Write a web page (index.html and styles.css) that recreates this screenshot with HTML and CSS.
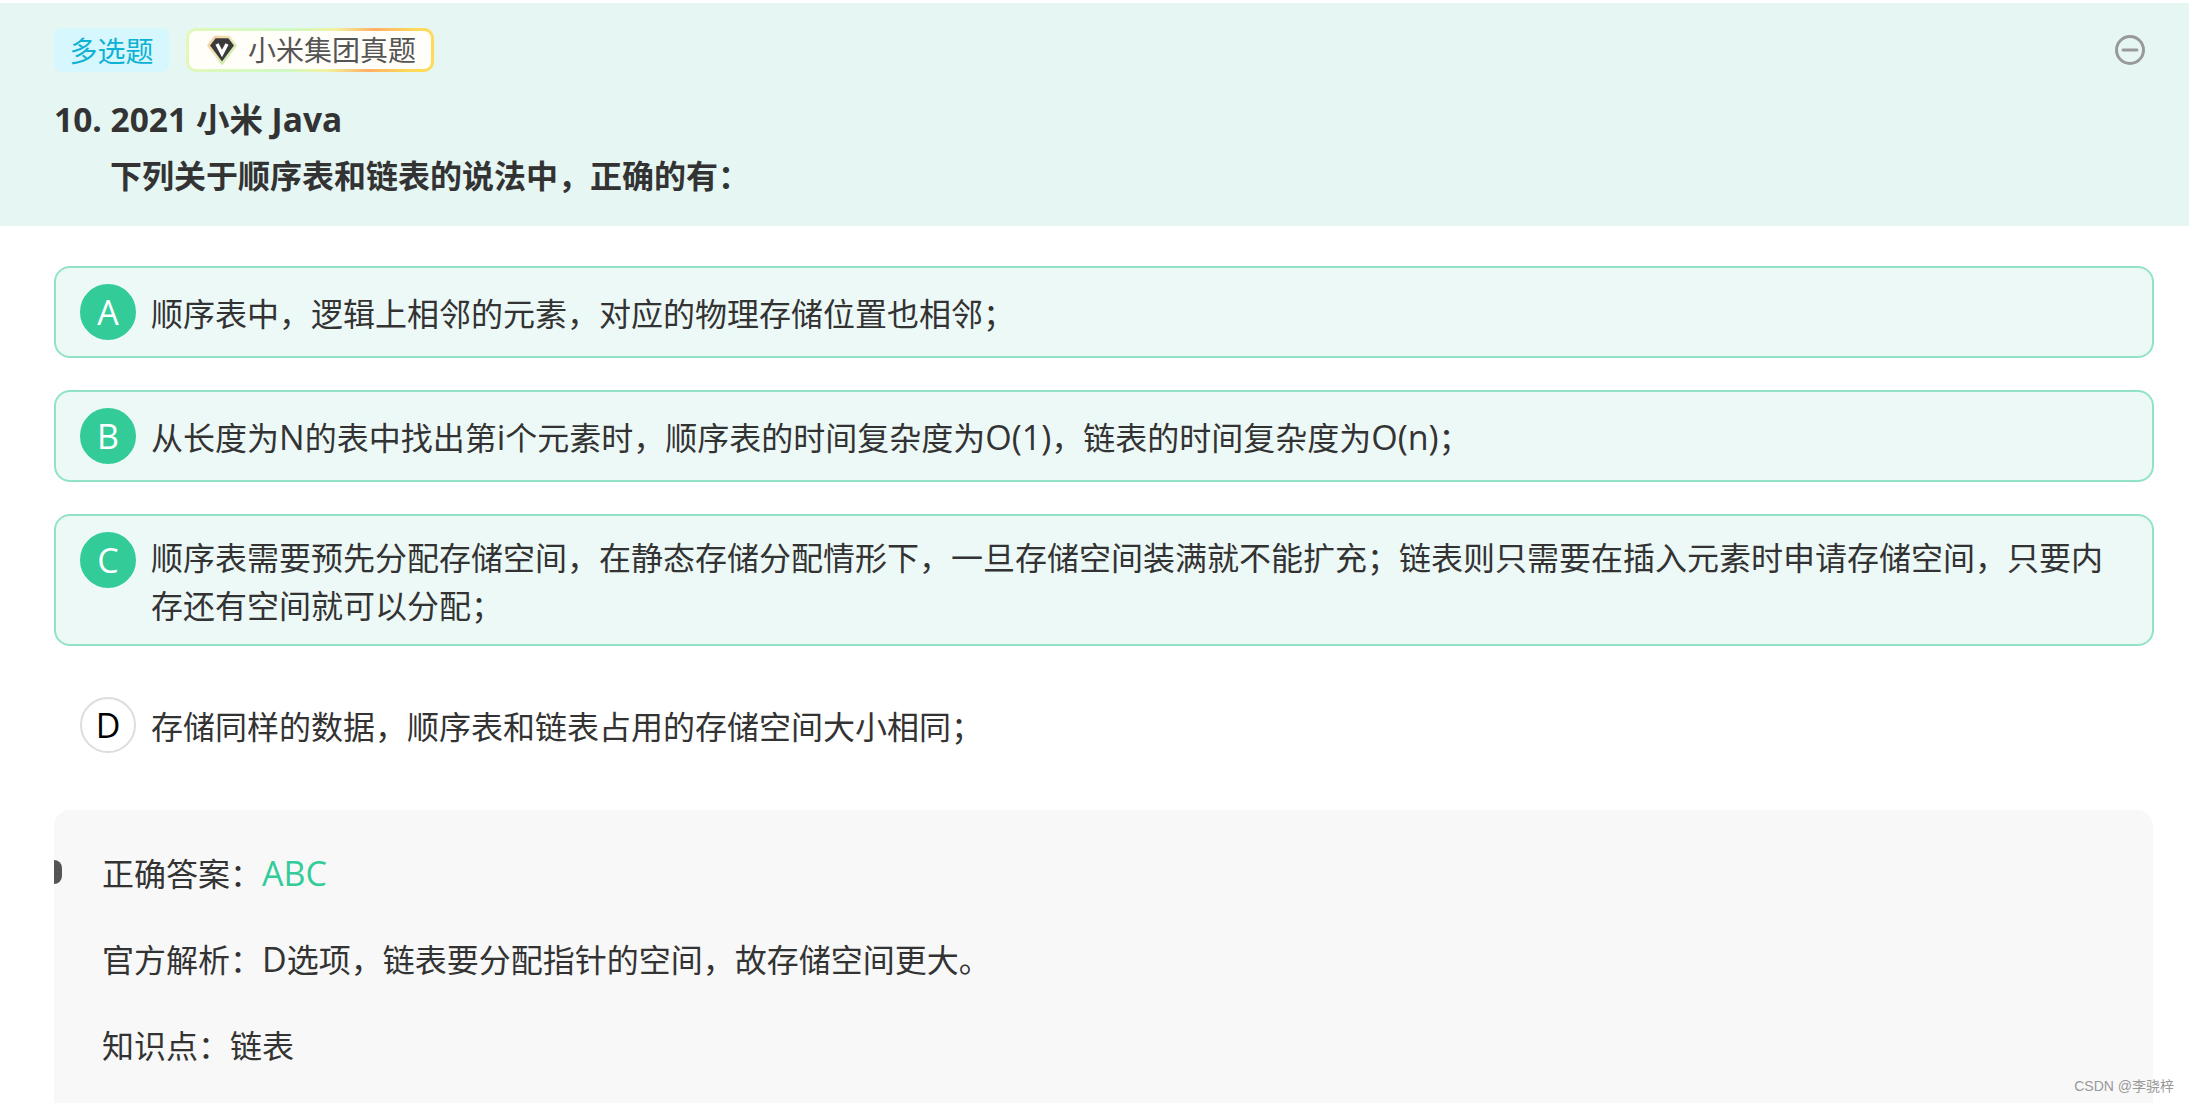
FILE: index.html
```html
<!DOCTYPE html>
<html lang="zh-CN">
<head>
<meta charset="utf-8">
<title>多选题</title>
<link rel="stylesheet" href="styles.css">
</head>
<body>
<header class="head">
  <div class="tags">
    <span class="tag-type">多选题</span>
    <span class="tag-co">
      <svg class="tag-icon" viewBox="0 0 32 32" aria-hidden="true">
        <defs>
          <linearGradient id="glow" x1="0" y1="0" x2="1" y2="1">
            <stop offset="0" stop-color="#f6c9a0"/>
            <stop offset="0.45" stop-color="#eee6b4"/>
            <stop offset="1" stop-color="#b5f0b0"/>
          </linearGradient>
        </defs>
        <path d="M9 3H23L29.500 11.500 16 29.500 2.500 11.500Z" fill="#3a3a3a" stroke="url(#glow)" stroke-width="2.500" stroke-linejoin="round"/>
        <path d="M11 10L16 19.500 21 10" fill="none" stroke="#fff" stroke-width="3.500"/>
      </svg>
      <span>小米集团真题</span>
    </span>
    <svg class="collapse" viewBox="0 0 30 30" aria-hidden="true">
      <circle cx="15" cy="15" r="13.500" fill="none" stroke="#999" stroke-width="3"/>
      <path d="M8 15H22" stroke="#999" stroke-width="3" stroke-linecap="round"/>
    </svg>
  </div>
  <h1 class="title">10. 2021 小米 Java</h1>
  <p class="question">下列关于顺序表和链表的说法中，正确的有：</p>
</header>
<main class="body">
  <div class="option on"><span class="mark">A</span><p class="text">顺序表中，逻辑上相邻的元素，对应的物理存储位置也相邻；</p></div>
  <div class="option on"><span class="mark">B</span><p class="text"><span>从长度为<span class="lat">N</span>的表中找出第<span class="lat">i</span>个元素时，顺序表的时间复杂度为<span class="lat">O(1)</span>，链表的时间复杂度为<span class="lat">O(n)</span>；</span></p></div>
  <div class="option on"><span class="mark">C</span><p class="text">顺序表需要预先分配存储空间，在静态存储分配情形下，一旦存储空间装满就不能扩充；链表则只需要在插入元素时申请存储空间，只要内存还有空间就可以分配；</p></div>
  <div class="option off"><span class="mark">D</span><p class="text">存储同样的数据，顺序表和链表占用的存储空间大小相同；</p></div>
  <section class="answer">
    <span class="handle"></span>
    <p class="line">正确答案：<span class="right lat">ABC</span></p>
    <p class="line">官方解析：<span class="lat">D</span>选项，链表要分配指针的空间，故存储空间更大。</p>
    <p class="line">知识点：链表</p>
  </section>
</main>
<div class="mark-csdn">CSDN @李骁梓</div>
</body>
</html>
```
FILE: styles.css
```css
* { box-sizing: border-box; }
html, body { margin: 0; height: 1103px; overflow: hidden; }
body {
  background: #fff;
  color: #333;
  font-family: "Open Sans", "Noto Sans CJK SC", sans-serif;
  font-size: 32px;
  position: relative;
  padding-top: 3px;
}
p, h1 { margin: 0; }
.head {
  height: 223px;
  background: #e5f6f3;
  padding: 25px 36px 0 54px;
}
.tags { display: flex; align-items: center; height: 44px; }
.tag-type {
  width: 115px; height: 44px;
  display: flex; align-items: center; justify-content: center;
  background: #d6f7fe; color: #0eb2d4;
  border-radius: 8px;
  font-size: 28px;
}
.tag-co {
  margin-left: 17px;
  width: 248px; height: 44px;
  padding-left: 17px;
  display: flex; align-items: center; gap: 10px;
  border: 3px solid transparent;
  border-radius: 10px;
  background:
    linear-gradient(#fffef8, #fffef8) padding-box,
    linear-gradient(100deg, #e2f9b8 0%, #cff9c6 42%, #f0f3a0 58%, #ffb066 74%, #ffd95a 90%, #ffd95a 100%) border-box;
  color: #555;
  font-size: 28px;
  line-height: 1;
}
.tag-icon { width: 32px; height: 32px; flex: none; }
.collapse { width: 30px; height: 30px; margin-left: auto; margin-right: 8px; }
.title {
  margin-top: 22px;
  font-size: 33.500px; font-weight: 700;
  line-height: 50px;
}
.question {
  margin-top: 7px;
  padding-left: 56px;
  font-weight: 700;
  line-height: 50px;
}
.body {
  padding: 40px 35px 0 54px;
  display: flex; flex-direction: column; gap: 32px;
}
.option {
  display: flex; align-items: center; gap: 15px;
  padding: 16px 24px 14px;
  border: 2px solid transparent;
  border-radius: 16px;
}
.option.on { background: #edf9f7; border-color: #92e2c8; }
.option.off { margin-top: 1px; }
.mark {
  flex: none; align-self: flex-start;
  width: 56px; height: 56px;
  border-radius: 50%;
  display: flex; align-items: center; justify-content: center;
  border: 2px solid #ddd;
  background: #fff; color: #000;
  font-size: 34px;
}
.on .mark { background: #33cc99; border-color: #33cc99; color: #fff; }
.text { line-height: 48px; min-height: 58px; padding-top: 2px; display: flex; align-items: center; }
.lat { font-size: 34px; line-height: 1; }
.answer {
  position: relative;
  margin: 7px 1px 0 0;
  height: 310px;
  background: #f8f8f8;
  border-radius: 16px;
  padding: 41px 48px 0;
}
.handle {
  position: absolute; left: 0; top: 50px;
  width: 8px; height: 24px;
  background: #555;
  border-radius: 0 8px 8px 0;
}
.line { line-height: 46px; margin-bottom: 40px; }
.right { color: #33cc99; }
.mark-csdn {
  position: absolute; right: 15px; bottom: 8px;
  color: #999;
  font-size: 14px;
  font-family: "Liberation Sans", "Noto Sans CJK SC", sans-serif;
}
```
